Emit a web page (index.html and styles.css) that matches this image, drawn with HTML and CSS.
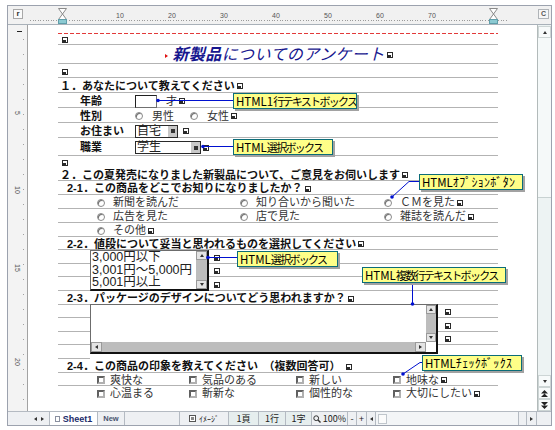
FILE: index.html
```html
<!DOCTYPE html>
<html lang="ja">
<head>
    <meta charset="UTF-8">
    <title>新製品についてのアンケート</title>
    <link rel="stylesheet" href="styles.css">
</head>
<body>
<div class="window">
    <div class="topbar">
        <div class="lcorner"><span class="tabbox">r</span></div>
        <div class="hruler">
            <div class="hr-nums"><span>10</span><span>20</span><span>30</span><span>40</span><span>50</span><span>60</span><span>70</span></div>
            <div class="hr-ticks"></div>
            <svg class="indent indent-l" width="9" height="16" viewBox="0 0 9 16"><path d="M0.5 0.5h8L4.5 6z" fill="#fff" stroke="#8a8a8a"/><path d="M4.5 6L8.5 11.5h-8z" fill="#fff" stroke="#8a8a8a"/><rect x="0.5" y="11.5" width="8" height="4" fill="#8ccad2" stroke="#5f9eaa"/></svg>
            <svg class="indent indent-r" width="9" height="16" viewBox="0 0 9 16"><path d="M0.5 0.5h8L4.5 6z" fill="#fff" stroke="#8a8a8a"/><path d="M4.5 6L8.5 11.5h-8z" fill="#fff" stroke="#8a8a8a"/><rect x="0.5" y="11.5" width="8" height="4" fill="#8ccad2" stroke="#5f9eaa"/></svg>
        </div>
        <div class="rcorner"><span class="cbox">C</span></div>
    </div>

    <div class="main">
        <div class="vruler">
            <div class="vr-dash"></div>
            <div class="vr-num n5"><span>5</span></div>
            <div class="vr-num n10"><span>10</span></div>
            <div class="vr-num n15"><span>15</span></div>
            <div class="vr-num n20"><span>20</span></div>
        </div>

        <div class="doc">
            <div class="page">
                <div class="margin-line"></div>
                <div class="row h11"><i class="ret"></i></div>
                <div class="row h19 center"><i class="mark"></i><span class="title"><b>新製品</b>についてのアンケート</span><i class="ret"></i></div>
                <div class="row h14"><i class="ret"></i></div>
                <div class="row h15 q">１．あなたについて教えてください<i class="ret"></i></div>
                <div class="row h15 ind2">
                    <span class="label">年齢</span><span class="textbox"></span><span class="unit">才</span><i class="ret"></i>
                </div>
                <div class="row h15 ind2">
                    <span class="label">性別</span>
                    <span class="choice"><i class="radio"></i>男性</span>
                    <span class="choice"><i class="radio"></i>女性</span><i class="ret"></i>
                </div>
                <div class="row h15 ind2">
                    <span class="label">お住まい</span>
                    <span class="select s-home"><span class="sel-text">自宅</span><span class="sel-btn"><i></i></span></span><i class="ret"></i>
                </div>
                <div class="row h18 ind2">
                    <span class="label">職業</span>
                    <span class="select s-job"><span class="sel-text">学生</span><span class="sel-btn"><i></i></span></span><i class="ret"></i>
                </div>
                <div class="row h12 plain"><i class="ret"></i></div>
                <div class="row h13 q">２．この夏発売になりました新製品について、ご意見をお伺いします<i class="ret"></i></div>
                <div class="row h14 q ind1">2-1．この商品をどこでお知りになりましたか？<i class="ret"></i></div>
                <div class="row h14 opts">
                    <span class="opt o1"><i class="radio"></i>新聞を読んだ</span>
                    <span class="opt o2"><i class="radio"></i>知り合いから聞いた</span>
                    <span class="opt"><i class="radio"></i>ＣＭを見た<i class="ret"></i></span>
                </div>
                <div class="row h14 opts">
                    <span class="opt o1"><i class="radio"></i>広告を見た</span>
                    <span class="opt o2"><i class="radio"></i>店で見た</span>
                    <span class="opt"><i class="radio"></i>雑誌を読んだ<i class="ret"></i></span>
                </div>
                <div class="row h14 opts">
                    <span class="opt o1"><i class="radio"></i>その他<i class="ret"></i></span>
                </div>
                <div class="row h13 q ind1">2-2．値段について妥当と思われるものを選択してください<i class="ret"></i></div>

                <div class="block b-list">
                    <div class="side-l">
                        <div class="row h14"></div>
                        <div class="row h13"></div>
                        <div class="row h14"></div>
                    </div>
                    <div class="listbox">
                        <div class="list-items">
                            <div>3,000円以下</div>
                            <div>3,001円～5,000円</div>
                            <div>5,001円以上</div>
                        </div>
                        <div class="vbar">
                            <span class="sbtn"><i class="up"></i></span>
                            <span class="sbtn"><i class="down"></i></span>
                        </div>
                    </div>
                    <div class="side-r">
                        <div class="row h14"><i class="ret"></i></div>
                        <div class="row h13"><i class="ret"></i></div>
                        <div class="row h14"><i class="ret"></i></div>
                    </div>
                </div>

                <div class="row h14 q ind1">2-3．パッケージのデザインについてどう思われますか？<i class="ret"></i></div>

                <div class="block b-area">
                    <div class="side-l">
                        <div class="row h13"></div>
                        <div class="row h14"></div>
                        <div class="row h13"></div>
                        <div class="row h14"></div>
                    </div>
                    <div class="textarea">
                        <div class="ta-body"></div>
                        <div class="vbar">
                            <span class="sbtn"><i class="up"></i></span>
                            <span class="sbtn"><i class="down"></i></span>
                        </div>
                        <div class="hbar">
                            <span class="sbtn"><i class="left"></i></span>
                            <span class="sbtn"><i class="right"></i></span>
                        </div>
                        <div class="ta-corner"></div>
                    </div>
                    <div class="side-r">
                        <div class="row h13"><i class="ret"></i></div>
                        <div class="row h14"><i class="ret"></i></div>
                        <div class="row h13"><i class="ret"></i></div>
                        <div class="row h14"></div>
                    </div>
                </div>

                <div class="row h14 q ind1">2-4．この商品の印象を教えてください　（複数回答可）<i class="ret gap"></i></div>
                <div class="row h13 opts">
                    <span class="opt k1"><i class="check"></i>爽快な</span>
                    <span class="opt k2"><i class="check"></i>気品のある</span>
                    <span class="opt k3"><i class="check"></i>新しい</span>
                    <span class="opt"><i class="check"></i>地味な<i class="ret"></i></span>
                </div>
                <div class="row h14 opts plain">
                    <span class="opt k1"><i class="check"></i>心温まる</span>
                    <span class="opt k2"><i class="check"></i>斬新な</span>
                    <span class="opt k3"><i class="check"></i>個性的な</span>
                    <span class="opt"><i class="check"></i>大切にしたい<i class="ret"></i></span>
                </div>
            </div>

            <!-- 吹き出しの引き出し線 -->
            <svg class="wires" width="509" height="386">
                <g stroke="#0010d0" fill="none" stroke-width="1">
                    <path d="M130 75.5H205"/>
                    <path d="M175 121.5H205"/>
                    <path d="M364 172L381 156.5H391"/>
                    <path d="M180 232.5H209"/>
                    <path d="M384.5 258V279"/>
                    <path d="M375 349L392 337.5H394"/>
                </g>
                <g fill="#0010d0">
                    <circle cx="130" cy="75.5" r="1.8"/>
                    <circle cx="175" cy="121.5" r="1.8"/>
                    <circle cx="364" cy="172" r="1.8"/>
                    <circle cx="180" cy="232.5" r="1.8"/>
                    <circle cx="384.5" cy="279" r="1.8"/>
                    <circle cx="375" cy="349" r="1.8"/>
                </g>
            </svg>

            <div class="callout c1">HTML1<span class="jp">行テキストボックス</span></div>
            <div class="callout c2">HTML<span class="jp">選択ボックス</span></div>
            <div class="callout c3">HTML<span class="hw">ｵﾌﾟｼｮﾝﾎﾞﾀﾝ</span></div>
            <div class="callout c4">HTML<span class="jp">選択ボックス</span></div>
            <div class="callout c5">HTML<span class="jp">複数行テキストボックス</span></div>
            <div class="callout c6">HTML<span class="hw">ﾁｪｯｸﾎﾞｯｸｽ</span></div>
        </div>

        <div class="vscroll">
            <span class="sb-btn"><i class="up"></i></span>
            <span class="sb-thumb"></span>
            <span class="sb-fill"></span>
            <span class="sb-btn"><i class="down"></i></span>
            <span class="sb-btn">
                <svg width="7" height="7" viewBox="0 0 7 7"><path d="M0 3.5L3.5 0L7 3.5z M0 7L3.5 3.5L7 7z" fill="#222"/></svg>
            </span>
            <span class="sb-btn">
                <svg width="7" height="7" viewBox="0 0 7 7"><path d="M0 0h7L3.5 3.5z M0 3.5h7L3.5 7z" fill="#222"/></svg>
            </span>
        </div>
    </div>

    <div class="status">
        <span class="st st-pad"></span>
        <span class="st st-nav"><i class="left"></i><i class="right"></i></span>
        <span class="st st-tab on"><i class="page-ico"></i>Sheet1</span>
        <span class="st st-tab new">New</span>
        <span class="st st-empty"></span>
        <span class="st st-view"><i class="view-ico"></i>ｲﾒｰｼﾞ</span>
        <span class="st st-field f1">1頁</span>
        <span class="st st-field f2">1行</span>
        <span class="st st-field f3">1字</span>
        <span class="st st-zoom">
            <svg width="8" height="8" viewBox="0 0 8 8"><circle cx="3.2" cy="3.2" r="2.4" fill="none" stroke="#333"/><path d="M5 5L7.5 7.5" stroke="#333" stroke-width="1.4"/></svg>100%
        </span>
        <span class="st st-btn">-</span>
        <span class="st st-btn w10">+</span>
        <span class="st st-btn"><i class="left"></i></span>
        <span class="st st-track"><i class="st-thumb"></i></span>
        <span class="st st-btn w8"></span>
        <span class="st st-btn w10"><i class="right"></i></span>
        <span class="st st-corner"></span>
    </div>
</div>
</body>
</html>
```

FILE: styles.css
```css
* {
    box-sizing: border-box;
}
body {
    margin: 0;
    background: #fff;
    font-family: "Noto Sans CJK JP", sans-serif;
}

/* ウィンドウ枠 */
.window {
    margin: 5px 0 0 7px;
    width: 545px;
    height: 421px;
    border: 1px solid #9ca2ae;
    display: flex;
    flex-direction: column;
    background: #f0f0f0;
}

/* 上のルーラー */
.topbar {
    display: flex;
    height: 19px;
    border-bottom: 1px solid #a9b1b9;
    background: #f1f1f1;
}
.lcorner {
    width: 20px;
    padding: 3px 0 0 5px;
}
.tabbox {
    display: block;
    width: 10px;
    height: 10px;
    border: 1px solid #a8a8a8;
    background: #fafafa;
    font: bold 8px/8px "Liberation Sans", sans-serif;
    color: #333;
    text-align: center;
}
.hruler {
    width: 509px;
    position: relative;
}
.hr-nums {
    display: flex;
    margin-left: 66px;
    padding-top: 6px;
}
.hr-nums span {
    width: 52px;
    text-align: center;
    font: 7px/7px "Liberation Sans", sans-serif;
    color: #555;
}
.hr-ticks {
    margin: 1px 0 0 2px;
    width: 478px;
    height: 1px;
    background: repeating-linear-gradient(90deg, #9a9a9a 0 1px, transparent 1px 2.6px);
}
.indent {
    position: absolute;
    top: 2px;
}
.indent-l {
    left: 30px;
}
.indent-r {
    left: 461px;
}
.rcorner {
    width: 14px;
    padding: 3px 0 0 1px;
}
.cbox {
    display: block;
    width: 11px;
    height: 10px;
    border: 1px solid #b0b4b8;
    background: #f6f6f6;
    font: bold 7px/8px "Liberation Sans", sans-serif;
    color: #555;
    text-align: center;
}

/* 中段 */
.main {
    display: flex;
    height: 386px;
}
.vruler {
    width: 20px;
    border-right: 1px solid #a2a2a2;
    background: #f3f3f3 repeating-linear-gradient(to bottom, #a0a0a0 0 1px, transparent 1px 15px) no-repeat 15px 14px / 1px 100%;
    padding-top: 6px;
}
.vr-dash {
    width: 5px;
    height: 1px;
    margin-left: 9px;
    background: #222;
}
.vr-num {
    height: 8px;
    display: flex;
    align-items: center;
    justify-content: center;
    font: 7px/7px "Liberation Sans", sans-serif;
    color: #555;
}
.vr-num span {
    writing-mode: vertical-rl;
}
.n5 { margin-top: 77px; }
.n10 { margin-top: 69px; }
.n15 { margin-top: 70px; }
.n20 { margin-top: 86px; }

.doc {
    width: 509px;
    position: relative;
    background: #fff;
    padding: 8px 0 0 30px;
    overflow: hidden;
}
.page {
    width: 440px;
}
.margin-line {
    height: 1px;
    background: repeating-linear-gradient(90deg, #e23a3a 0 4px, transparent 4px 6px);
}

/* 罫線の行 */
/* 欧文フォントを先頭にして行の箱を低くし、詰まった罫線に収める */
.row {
    display: flex;
    align-items: center;
    border-bottom: 1px solid #b3b3b3;
    padding: 2px 0 0 2px;
    font-family: "Liberation Sans", "Noto Sans CJK JP", sans-serif;
    font-size: 11px;
    line-height: 1;
    color: #222;
    white-space: nowrap;
}
.row.plain {
    border-bottom-color: transparent;
}
.h11 { height: 11px; }
.h12 { height: 12px; }
.h13 { height: 13px; }
.h14 { height: 14px; }
.h15 { height: 15px; }
.h18 { height: 18px; }
.h19 { height: 19px; }
.center {
    justify-content: center;
}
.q {
    font-weight: 700;
    color: #111;
}
.ind1 {
    padding-left: 9px;
}
.ind2 {
    padding-left: 22px;
}

.ret {
    display: inline-block;
    flex: none;
    width: 6px;
    height: 6px;
    margin-left: 2px;
    border: 1px solid #2a2a2a;
    position: relative;
}
.ret::after {
    content: '';
    position: absolute;
    left: 0;
    bottom: 0;
    width: 3px;
    height: 2px;
    background: #2a2a2a;
}
.ret.gap {
    margin-left: 5px;
}

.mark {
    width: 0;
    height: 0;
    border-left: 3px solid #e01010;
    border-top: 2.5px solid transparent;
    border-bottom: 2.5px solid transparent;
    margin: 2px 4px 0 0;
}
.title {
    font-size: 16px;
    font-style: italic;
    letter-spacing: .4px;
    color: #16168e;
}
.title b {
    font-weight: 700;
}

.label {
    width: 55px;
    font-weight: 700;
    color: #111;
}
.textbox {
    width: 22px;
    height: 13px;
    border: 1px solid;
    border-color: #202020 #707070 #707070 #202020;
    background: #fff;
}
.unit {
    margin-left: 9px;
}
.choice {
    display: flex;
    align-items: center;
    margin-right: 16px;
    color: #333;
}
.choice:last-of-type {
    margin-right: 0;
}
.choice .radio {
    margin-right: 9px;
}

.radio {
    display: inline-block;
    flex: none;
    width: 8px;
    height: 8px;
    border-radius: 50%;
    border: 1px solid #8c8c8c;
    box-shadow: inset 1px 1px 0 #6e6e6e;
    background: #fff;
}
.check {
    display: inline-block;
    flex: none;
    width: 8px;
    height: 8px;
    border: 2px solid;
    border-color: #606060 #b0b0b0 #b0b0b0 #606060;
    background: #fff;
}

.select {
    display: flex;
    height: 13px;
    border: 1px solid #2a2a2a;
    background: #fff;
    font-size: 12px;
    line-height: 11px;
}
.s-home {
    width: 43px;
}
.s-job {
    width: 66px;
}
.sel-text {
    flex: 1;
    padding-left: 1px;
}
.sel-btn {
    width: 9px;
    display: flex;
    align-items: center;
    justify-content: center;
    background: #c8c8c8 radial-gradient(#7a7a7a .6px, transparent .7px) 0 0 / 2px 2px;
}
.sel-btn i {
    width: 4px;
    height: 4px;
    background: #333;
}
.s-home + .ret {
    margin-left: 5px;
}

.opts {
    padding-left: 39px;
}
.opt {
    display: flex;
    align-items: center;
    color: #333;
}
.opt .radio {
    margin-right: 8px;
}
.opt .check {
    margin-right: 5px;
}
.o1 { width: 143px; }
.o2 { width: 144px; }
.k1 { width: 92px; }
.k2 { width: 107px; }
.k3 { width: 97px; }

/* リストボックスとテキストエリア */
.block {
    display: flex;
}
.side-l {
    width: 32px;
}
.side-r {
    flex: 1;
}
.b-list .side-r .row {
    padding-left: 3px;
}
.b-area .side-r .row {
    padding-left: 5px;
}

.listbox {
    width: 119px;
    height: 41px;
    display: flex;
    border: 1px solid;
    border-width: 1px 2px 2px 1px;
    border-color: #6c6c6c #111 #111 #6c6c6c;
    background: #fff;
}
.list-items {
    flex: 1;
    padding-left: 1px;
    font-family: "Liberation Sans", "Noto Sans CJK JP", sans-serif;
    font-size: 12.5px;
    line-height: 12.6px;
    color: #222;
    white-space: nowrap;
}
.vbar {
    width: 11px;
    display: flex;
    flex-direction: column;
    justify-content: space-between;
    background: #bdbdbd;
}
.sbtn {
    height: 9px;
    display: flex;
    align-items: center;
    justify-content: center;
    background: #e4e4e4 radial-gradient(#8a8a8a .6px, transparent .7px) 0 0 / 2px 2px;
    border: 1px solid #9a9a9a;
}
.up,
.down,
.left,
.right {
    display: block;
    width: 0;
    height: 0;
}
.up {
    border: 2.5px solid transparent;
    border-top: 0;
    border-bottom: 3px solid #333;
}
.down {
    border: 2.5px solid transparent;
    border-bottom: 0;
    border-top: 3px solid #333;
}
.left {
    border: 2.5px solid transparent;
    border-left: 0;
    border-right: 3px solid #333;
}
.right {
    border: 2.5px solid transparent;
    border-right: 0;
    border-left: 3px solid #333;
}

.textarea {
    width: 348px;
    height: 50px;
    margin-top: -1px;
    display: grid;
    grid-template-columns: 1fr 10px;
    grid-template-rows: 1fr 10px;
    border: 1px solid;
    border-width: 1px 2px 2px 1px;
    border-color: #6c6c6c #111 #111 #6c6c6c;
    background: #fff;
}
.textarea .vbar {
    width: 10px;
}
.hbar {
    display: flex;
    justify-content: space-between;
    background: #bdbdbd;
}
.hbar .sbtn {
    width: 11px;
    height: 10px;
}
.ta-corner {
    background: #fff;
}

/* 吹き出し */
.wires {
    position: absolute;
    left: 0;
    top: 0;
}
.callout {
    position: absolute;
    height: 16px;
    padding: 0 2px;
    border: 1px solid #0b6c78;
    background: #ffff48 radial-gradient(rgba(255, 255, 255, .75) .6px, transparent .8px) 0 0 / 2px 2px;
    box-shadow: 2px 2px 0 #a2a2a2;
    font-size: 11.5px;
    line-height: 14px;
    color: #000;
    white-space: nowrap;
    overflow: hidden;
}
.callout .jp {
    font-size: 11px;
    letter-spacing: -1.7px;
}
.callout .hw {
    font-size: 12px;
    letter-spacing: .3px;
}
.c1 { left: 205px; top: 68px; width: 124px; }
.c2 { left: 205px; top: 114px; width: 100px; }
.c3 { left: 391px; top: 149px; width: 104px; }
.c4 { left: 209px; top: 226px; width: 101px; }
.c5 { left: 334px; top: 242px; width: 144px; }
.c6 { left: 394px; top: 330px; width: 100px; }

/* 右のスクロールバー */
.vscroll {
    width: 14px;
    border-left: 1px solid #b2baba;
    background: #edf3f3;
    display: flex;
    flex-direction: column;
    padding-top: 1px;
}
.sb-btn {
    height: 12px;
    flex: none;
    display: flex;
    align-items: center;
    justify-content: center;
    border: 1px solid #cdd5d5;
    background: #f7fafa;
}
.sb-thumb {
    height: 160px;
    border-bottom: 1px solid #c8d2d2;
    background: #f5f9f9;
}
.sb-fill {
    flex: 1;
}

/* ステータスバー */
.status {
    display: flex;
    height: 14px;
    border-top: 1px solid #b4bac2;
    background: #eef0f3;
    font: 9px/12px "Noto Sans CJK JP", sans-serif;
    color: #222;
}
.st {
    display: flex;
    align-items: center;
    justify-content: center;
    flex: none;
    border-right: 1px solid #b4bac2;
    white-space: nowrap;
}
.st-pad { width: 20px; border-right: 0; }
.st-nav { width: 22px; gap: 4px; }
.st-tab { width: 27px; }
.st-tab.on {
    width: 48px;
    background: #fff;
    font: bold 9px/12px "Liberation Sans", sans-serif;
    color: #1b2b6b;
}
.st-tab.new {
    font: bold 7.5px/12px "Liberation Sans", sans-serif;
    color: #4a5470;
}
.page-ico {
    width: 5px;
    height: 6px;
    border: 1px solid #8a90a0;
    margin-right: 3px;
}
.st-empty { width: 55px; }
.st-view { width: 49px; font-size: 8px; }
.view-ico {
    width: 7px;
    height: 7px;
    border: 1px solid #555;
    box-shadow: inset 0 0 0 1px #fff, inset 0 0 0 3px #888;
    margin-right: 3px;
}
.st-field {
    background: #e6eeee;
}
.f1 { width: 30px; }
.f2 { width: 27px; }
.f3 { width: 26px; }
.st-zoom { width: 36px; gap: 2px; }
.st-btn { width: 9px; }
.st-btn.w10 { width: 10px; }
.st-btn.w8 { width: 8px; }
.st-track {
    width: 143px;
    justify-content: flex-start;
    background: #f3f5f7;
    padding-left: 2px;
}
.st-thumb {
    width: 9px;
    height: 10px;
    border: 1px solid #c0c6cc;
    background: #fbfbfb;
}
.st-corner {
    width: 14px;
    border-right: 0;
}
```
